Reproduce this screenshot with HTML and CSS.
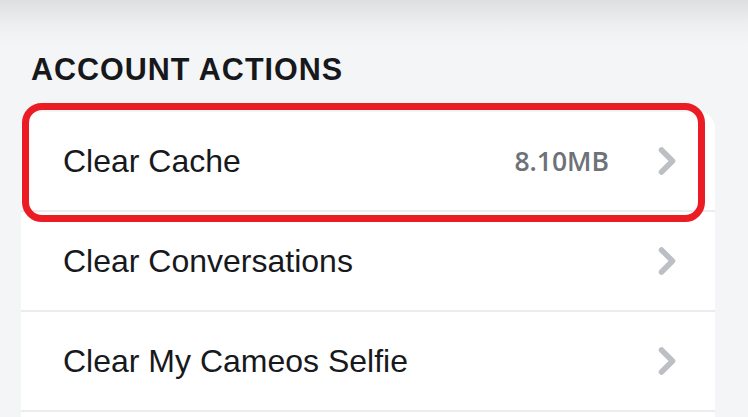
FILE: index.html
```html
<!DOCTYPE html>
<html>
<head>
<meta charset="utf-8">
<link rel="stylesheet" href="styles.css">
</head>
<body>
<div class="page">
  <h2 class="section-title">ACCOUNT ACTIONS</h2>
  <div class="card">
    <div class="row highlighted">
      <span class="label">Clear Cache</span>
      <span class="right">
        <span class="value">8.10MB</span>
        <svg class="chev" width="20" height="30" viewBox="0 0 20 30"><path d="M4.5 4 L15.5 15 L4.5 26" fill="none" stroke="#bcbfc4" stroke-width="5.5" stroke-linecap="round" stroke-linejoin="round"/></svg>
      </span>
      <div class="highlight"></div>
    </div>
    <div class="row">
      <span class="label">Clear Conversations</span>
      <span class="right">
        <svg class="chev" width="20" height="30" viewBox="0 0 20 30"><path d="M4.5 4 L15.5 15 L4.5 26" fill="none" stroke="#bcbfc4" stroke-width="5.5" stroke-linecap="round" stroke-linejoin="round"/></svg>
      </span>
    </div>
    <div class="row">
      <span class="label">Clear My Cameos Selfie</span>
      <span class="right">
        <svg class="chev" width="20" height="30" viewBox="0 0 20 30"><path d="M4.5 4 L15.5 15 L4.5 26" fill="none" stroke="#bcbfc4" stroke-width="5.5" stroke-linecap="round" stroke-linejoin="round"/></svg>
      </span>
    </div>
    <div class="row"></div>
  </div>
</div>
</body>
</html>
```
FILE: styles.css
```css
html, body {
  margin: 0;
  padding: 0;
  height: 100%;
  overflow: hidden;
}
body {
  background: linear-gradient(to bottom, #dedfe0 0px, #eeeff0 25px, #f4f5f6 45px, #f4f5f7 100%);
  font-family: "Liberation Sans", Arial, sans-serif;
}
.page {
  padding-top: 51px;
}
.section-title {
  margin: 0 0 25px 31px;
  font-size: 30.5px;
  line-height: 36px;
  font-weight: bold;
  color: #16181b;
  letter-spacing: 1px;
}
.card {
  margin-left: 21px;
  width: 694px;
  background: #ffffff;
  border-radius: 16px 16px 0 0;
}
.row {
  position: relative;
  height: 98px;
  border-bottom: 2px solid #ececee;
  display: flex;
  align-items: center;
  justify-content: space-between;
  padding: 0 38px 0 42px;
}
.label {
  font-size: 32px;
  color: #17191c;
}
.right {
  display: flex;
  align-items: center;
}
.value {
  font-family: "Open Sans", "Liberation Sans", sans-serif;
  font-weight: 600;
  font-size: 26.5px;
  color: #6d7178;
  margin-right: 48px;
}
.chev {
  display: block;
}
.highlight {
  position: absolute;
  left: 1px;
  top: -9px;
  width: 669px;
  height: 105px;
  border: 7px solid #ec1c24;
  border-radius: 20px;
  pointer-events: none;
}
```
